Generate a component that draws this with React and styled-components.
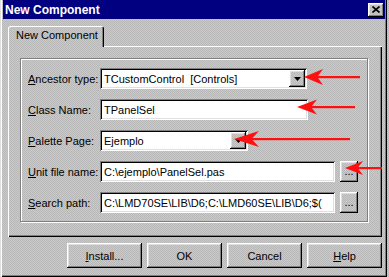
import React from 'react';
import styled, { createGlobalStyle } from 'styled-components';

const dither = `
  background-color: #c0c0c0;
  background-image: repeating-conic-gradient(#cacaca 0 25%, #b8b8b8 0 50%);
  background-size: 2px 2px;
  background-attachment: fixed;
`;

const raised = `
  box-shadow: inset -1px -1px #000, inset 1px 1px #fff, inset -2px -2px #808080, inset 2px 2px #dfdfdf;
`;

const sunken = `
  box-shadow: inset 1px 1px #808080, inset -1px -1px #fff, inset 2px 2px #000, inset -2px -2px #dfdfdf;
`;

const GlobalStyle = createGlobalStyle`
  html, body { margin: 0; padding: 0; }
  body {
    ${dither}
    width: 389px;
    height: 277px;
    overflow: hidden;
    font-family: "Liberation Sans", Arial, sans-serif;
    font-size: 11px;
    color: #000;
  }
`;

const Window = styled.div`
  position: relative;
  box-sizing: border-box;
  width: 387px;
  height: 277px;
  padding: 0 2px 0 3px;
  display: flex;
  flex-direction: column;
  box-shadow: inset 1px 0 #dfdfdf, inset 2px 0 #fff, inset -1px -1px #000, inset -2px -2px #808080;
`;

const TitleBar = styled.div`
  height: 19px;
  background: #000080;
  color: #fff;
  display: flex;
  align-items: center;
  justify-content: space-between;
  padding: 0 1px 0 2px;
  font-weight: bold;
  font-size: 12px;
`;

const CloseBtn = styled.div`
  ${dither}
  ${raised}
  width: 16px;
  height: 14px;
  display: flex;
  align-items: center;
  justify-content: center;
`;

const Body = styled.div`
  padding: 7px 0 0 5px;
  display: flex;
  flex-direction: column;
`;

const TabStrip = styled.div`
  display: flex;
  height: 20px;
`;

const Tab = styled.div`
  ${dither}
  position: relative;
  z-index: 1;
  box-sizing: border-box;
  width: 96px;
  height: 21px;
  padding: 3px 0 0 8px;
  border-radius: 2px 2px 0 0;
  box-shadow: inset 1px 1px #fff, inset -1px 0 #000, inset -2px 0 #808080;
`;

const Panel = styled.div`
  box-sizing: border-box;
  width: 374px;
  height: 191px;
  padding: 12px 0 0 12px;
  box-shadow: inset 1px 1px #fff, inset -1px -1px #000, inset -2px -2px #808080;
`;

const Group = styled.div`
  box-sizing: border-box;
  width: 348px;
  height: 164px;
  border: 1px solid #808080;
  box-shadow: inset 1px 1px #fff, 1px 1px #fff;
  padding: 9px 0 0 7px;
  display: grid;
  grid-template-columns: 72px auto;
  grid-auto-rows: 21px;
  row-gap: 10px;
  align-items: center;
`;

const Label = styled.div`
  white-space: nowrap;
  u { text-decoration: underline; text-underline-offset: 1px; }
`;

const Cell = styled.div`
  display: flex;
  align-items: center;
  height: 21px;
`;

const Field = styled.div`
  box-sizing: border-box;
  width: ${p => p.$w}px;
  height: 21px;
  background: #fff;
  ${sunken}
  display: flex;
  align-items: center;
  padding: 0 2px 0 4px;
  white-space: pre;
  overflow: hidden;
`;

const FieldText = styled.span`
  flex: 1;
  overflow: hidden;
`;

const DropBtn = styled.div`
  ${dither}
  ${raised}
  width: 16px;
  height: 17px;
  flex: none;
  display: flex;
  align-items: center;
  justify-content: center;
`;

const DotsBtn = styled.div`
  ${dither}
  ${raised}
  box-sizing: border-box;
  width: 18px;
  height: 21px;
  margin-left: 5px;
  display: flex;
  align-items: center;
  justify-content: center;
  padding-bottom: 2px;
`;

const ButtonRow = styled.div`
  width: 374px;
  display: flex;
  justify-content: flex-end;
  gap: 5px;
  margin-top: 6px;
`;

const Button = styled.div`
  ${dither}
  ${raised}
  width: 75px;
  height: 25px;
  display: flex;
  align-items: center;
  justify-content: center;
  u { text-decoration: underline; text-underline-offset: 1px; }
`;

const Overlay = styled.svg`
  position: absolute;
  left: 0;
  top: 0;
  pointer-events: none;
`;

const Triangle = () => (
  <svg width="7" height="4" viewBox="0 0 7 4"><path d="M0 0h7L3.5 4z" fill="#000" /></svg>
);

const Arrow = ({ x, y, back, half, end }) => (
  <g fill="#ff1010" stroke="none">
    <rect x={x + 8} y={y - 1} width={end - x - 8} height="2.2" />
    <polygon points={`${x},${y} ${back},${y - half} ${back - (back - x) * 0.3},${y} ${back},${y + half}`} />
  </g>
);

const rows = [
  { label: 'Ancestor type:', u: 'A', text: 'TCustomControl  [Controls]', w: 207, combo: true },
  { label: 'Class Name:', u: 'C', text: 'TPanelSel', w: 208 },
  { label: 'Palette Page:', u: 'P', text: 'Ejemplo', w: 148, combo: true },
  { label: 'Unit file name:', u: 'U', text: 'C:\\ejemplo\\PanelSel.pas', w: 235, dots: true },
  { label: 'Search path:', u: 'S', text: 'C:\\LMD70SE\\LIB\\D6;C:\\LMD60SE\\LIB\\D6;$(', w: 235, dots: true },
];

export default function App() {
  return (
    <>
      <GlobalStyle />
      <Window>
        <TitleBar>
          <span>New Component</span>
          <CloseBtn>
            <svg width="8" height="7" viewBox="0 0 8 7">
              <path d="M0.5 0.5L7.5 6.5M7.5 0.5L0.5 6.5" stroke="#000" strokeWidth="1.6" />
            </svg>
          </CloseBtn>
        </TitleBar>
        <Body>
          <TabStrip>
            <Tab>New Component</Tab>
          </TabStrip>
          <Panel>
            <Group>
              {rows.map(r => (
                <React.Fragment key={r.label}>
                  <Label><u>{r.u}</u>{r.label.slice(1)}</Label>
                  <Cell>
                    <Field $w={r.w}>
                      <FieldText>{r.text}</FieldText>
                      {r.combo && <DropBtn><Triangle /></DropBtn>}
                    </Field>
                    {r.dots && <DotsBtn>...</DotsBtn>}
                  </Cell>
                </React.Fragment>
              ))}
            </Group>
          </Panel>
          <ButtonRow>
            <Button><span><u>I</u>nstall...</span></Button>
            <Button>OK</Button>
            <Button>Cancel</Button>
            <Button><span><u>H</u>elp</span></Button>
          </ButtonRow>
        </Body>
        <Overlay width="389" height="277" viewBox="0 0 389 277">
          <Arrow x={304} y={77} back={323} half={8} end={360} />
          <Arrow x={297} y={107} back={317} half={7.5} end={355} />
          <Arrow x={234} y={139} back={259} half={8} end={350} />
          <Arrow x={345} y={168} back={363} half={7} end={382} />
        </Overlay>
      </Window>
    </>
  );
}
